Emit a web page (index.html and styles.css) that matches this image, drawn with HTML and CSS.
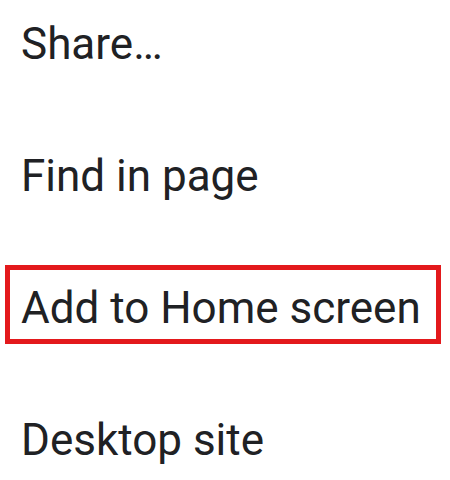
FILE: index.html
```html
<!DOCTYPE html>
<html>
<head>
<meta charset="utf-8">
<link rel="stylesheet" href="styles.css">
</head>
<body>
<ul class="menu">
  <li class="item">Share…</li>
  <li class="item">Find in page</li>
  <li class="item item--highlight">Add to Home screen</li>
  <li class="item">Desktop site</li>
</ul>
</body>
</html>
```

FILE: styles.css
```css
html, body {
  margin: 0;
  padding: 0;
  background: #ffffff;
}
.menu {
  list-style: none;
  margin: 0;
  padding: 6px 14px 0 10px;
  display: flex;
  flex-direction: column;
  gap: 63px;
  font-family: Roboto, "Noto Sans", sans-serif;
  font-size: 44px;
  color: #202124;
}
.item {
  line-height: 52px;
  padding: 12px 0 5px 11px;
  white-space: nowrap;
}
.item--highlight {
  outline: 5px solid #e3191c;
}
```
